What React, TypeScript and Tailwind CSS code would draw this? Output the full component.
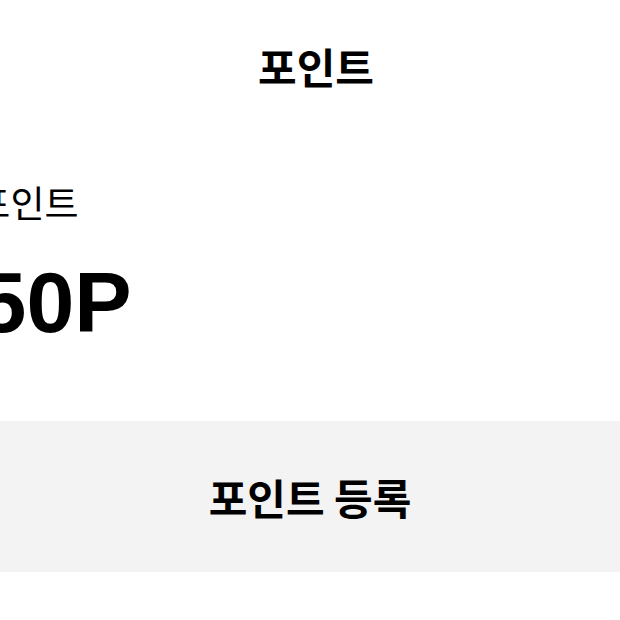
export default function App() {
  const font = { fontFamily: '"Noto Sans CJK KR", "Noto Sans", sans-serif' };
  return (
    <div className="w-[620px] h-[620px] bg-white overflow-hidden text-black" style={font}>
      <header className="h-[132px] pl-[12px] flex items-center justify-center">
        <h1 className="text-[42px] font-bold leading-none">포인트</h1>
      </header>
      <section className="ml-[-100px] pt-[52px]">
        <p className="text-[37px] leading-none whitespace-nowrap">보유 포인트</p>
      </section>
      <p
        className="ml-[-141px] mt-[38px] text-[86px] font-bold leading-none whitespace-nowrap"
        style={{ fontFamily: '"Liberation Sans", Arial, sans-serif' }}
      >
        1,250P
      </p>
      <button className="mt-[76px] w-full h-[151px] bg-[#f3f3f3] flex items-center justify-center text-[42px] font-bold">
        포인트 등록
      </button>
    </div>
  );
}
